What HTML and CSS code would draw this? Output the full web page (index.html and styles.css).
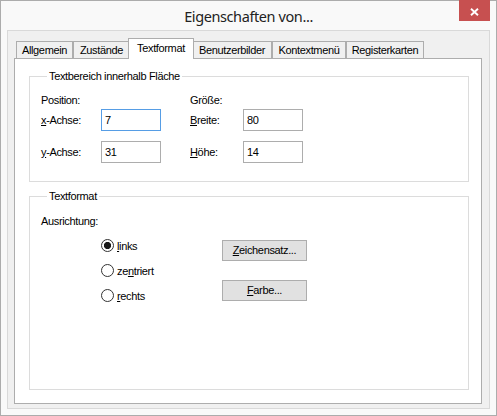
FILE: index.html
```html
<!DOCTYPE html>
<html lang="de">
<head>
<meta charset="utf-8">
<title>Eigenschaften von...</title>
<link rel="stylesheet" href="styles.css">
</head>
<body>
<div class="window">
  <div class="titlebar">
    <div class="title">Eigenschaften von...</div>
    <div class="close">
      <svg width="9" height="8" viewBox="0 0 9 8"><path d="M1 0.8 L8 7.2 M8 0.8 L1 7.2" stroke="#fff" stroke-width="1.9" fill="none"/></svg>
    </div>
  </div>
  <div class="client">
    <div class="tabs">
      <div class="tab tab-allgemein">Allgemein</div>
      <div class="tab tab-zustaende">Zustände</div>
      <div class="tab tab-textformat active">Textformat</div>
      <div class="tab tab-benutzer">Benutzerbilder</div>
      <div class="tab tab-kontext">Kontextmenü</div>
      <div class="tab tab-register">Registerkarten</div>
    </div>
    <div class="panel">
      <div class="group group-area">
        <div class="legend">Textbereich innerhalb Fläche</div>
        <div class="pos-grid">
          <div class="lbl-head">Position:</div>
          <div></div>
          <div></div>
          <div class="lbl-head">Größe:</div>
          <div></div>

          <div class="lbl"><u>x</u>-Achse:</div>
          <div class="edit focused">7</div>
          <div></div>
          <div class="lbl"><u>B</u>reite:</div>
          <div class="edit">80</div>

          <div class="lbl"><u>y</u>-Achse:</div>
          <div class="edit">31</div>
          <div></div>
          <div class="lbl"><u>H</u>öhe:</div>
          <div class="edit">14</div>
        </div>
      </div>
      <div class="group group-format">
        <div class="legend">Textformat</div>
        <div class="align-label">Ausrichtung:</div>
        <div class="align-row">
          <div class="radios">
            <div class="radio"><span class="radio-dot checked"></span><span><u>l</u>inks</span></div>
            <div class="radio"><span class="radio-dot"></span><span>ze<u>n</u>triert</span></div>
            <div class="radio"><span class="radio-dot"></span><span><u>r</u>echts</span></div>
          </div>
          <div class="buttons">
            <div class="btn"><u>Z</u>eichensatz...</div>
            <div class="btn"><u>F</u>arbe...</div>
          </div>
        </div>
      </div>
    </div>
  </div>
</div>
</body>
</html>
```

FILE: styles.css
```css
* { box-sizing: border-box; }
html, body { margin: 0; padding: 0; }
body {
  width: 497px;
  height: 416px;
  font-family: "Liberation Sans", Arial, sans-serif;
  font-size: 11px;
  letter-spacing: -0.35px;
  color: #000;
  background: #fff;
}
u { text-decoration: underline; text-underline-offset: 1px; }

.window {
  width: 497px;
  height: 416px;
  border: 1px solid #acacac;
  background: #f9f9f9;
  display: flex;
  flex-direction: column;
}

.titlebar {
  height: 29px;
  flex: none;
  display: grid;
  grid-template-columns: 1fr auto 1fr;
  align-items: start;
}
.title {
  grid-column: 2;
  font-family: "Noto Sans", "Open Sans", sans-serif;
  font-size: 14.5px;
  letter-spacing: -0.4px;
  line-height: 30px;
  color: #222;
  white-space: nowrap;
}
.close {
  grid-column: 3;
  justify-self: end;
  width: 31px;
  height: 21px;
  margin-top: -1px;
  margin-right: 6px;
  padding-top: 2px;
  background: #c75050;
  display: flex;
  align-items: center;
  justify-content: center;
}
.close svg { display: block; }

.client {
  flex: 1;
  margin: 0 6px 6px 6px;
  border: 1px solid #d9d9d9;
  background: #f0f0f0;
  padding: 7px 7px 4px 6px;
  display: flex;
  flex-direction: column;
}

.tabs {
  display: flex;
  align-items: flex-end;
  height: 20px;
  flex: none;
  padding-left: 2px;
}
.tab {
  height: 17px;
  border: 1px solid #adadad;
  border-bottom: 0;
  background: #f0f0f0;
  line-height: 16px;
  text-align: center;
  white-space: nowrap;
}
.tab-allgemein { width: 57px; }
.tab-zustaende { width: 57px; }
.tab-textformat { width: 66px; }
.tab-benutzer { width: 80px; }
.tab-kontext { width: 74px; }
.tab-register { width: 78px; }
.tab.active {
  height: 21px;
  margin: 0 -2px -1px -2px;
  background: #fff;
  line-height: 18px;
  position: relative;
  z-index: 1;
}

.panel {
  flex: 1;
  border: 1px solid #adadad;
  background: #fff;
  padding: 0 12px 0 14px;
}

.group {
  border: 1px solid #dcdcdc;
}
.legend {
  width: max-content;
  height: 13px;
  margin: -7px 0 0 6px;
  padding: 0 2px;
  background: #fff;
  line-height: 13px;
}
.group-area {
  margin-top: 17px;
  padding: 0 0 18px 11px;
}
.group-format {
  margin-top: 14px;
  padding: 0 0 81px 11px;
}

.pos-grid {
  display: grid;
  grid-template-columns: 60px 60px 29px 53px 60px;
  grid-template-rows: 15px 32px 22px;
  align-items: start;
  margin-top: 11px;
}
.lbl-head { line-height: 13px; }
.lbl { line-height: 22px; white-space: nowrap; }
.edit {
  height: 22px;
  border: 1px solid #adadad;
  background: #fff;
  padding-left: 3px;
  line-height: 20px;
}
.edit.focused { border-color: #569de5; }

.align-label {
  margin-top: 12px;
  line-height: 13px;
}
.align-row {
  display: flex;
  margin-top: 5px;
  padding-left: 60px;
}
.radios {
  width: 121px;
  display: flex;
  flex-direction: column;
}
.radio {
  height: 25px;
  display: flex;
  align-items: center;
  gap: 3px;
}
.radio-dot {
  width: 13px;
  height: 13px;
  flex: none;
  border: 1px solid #333;
  border-radius: 50%;
  background: #fff;
}
.radio-dot.checked {
  background: radial-gradient(circle, #1a1a1a 0 3.3px, #fff 3.9px);
}
.buttons {
  display: flex;
  flex-direction: column;
  gap: 19px;
  margin-top: 7px;
}
.btn {
  width: 85px;
  height: 21px;
  border: 1px solid #adadad;
  background: #e1e1e1;
  text-align: center;
  line-height: 19px;
}
```
